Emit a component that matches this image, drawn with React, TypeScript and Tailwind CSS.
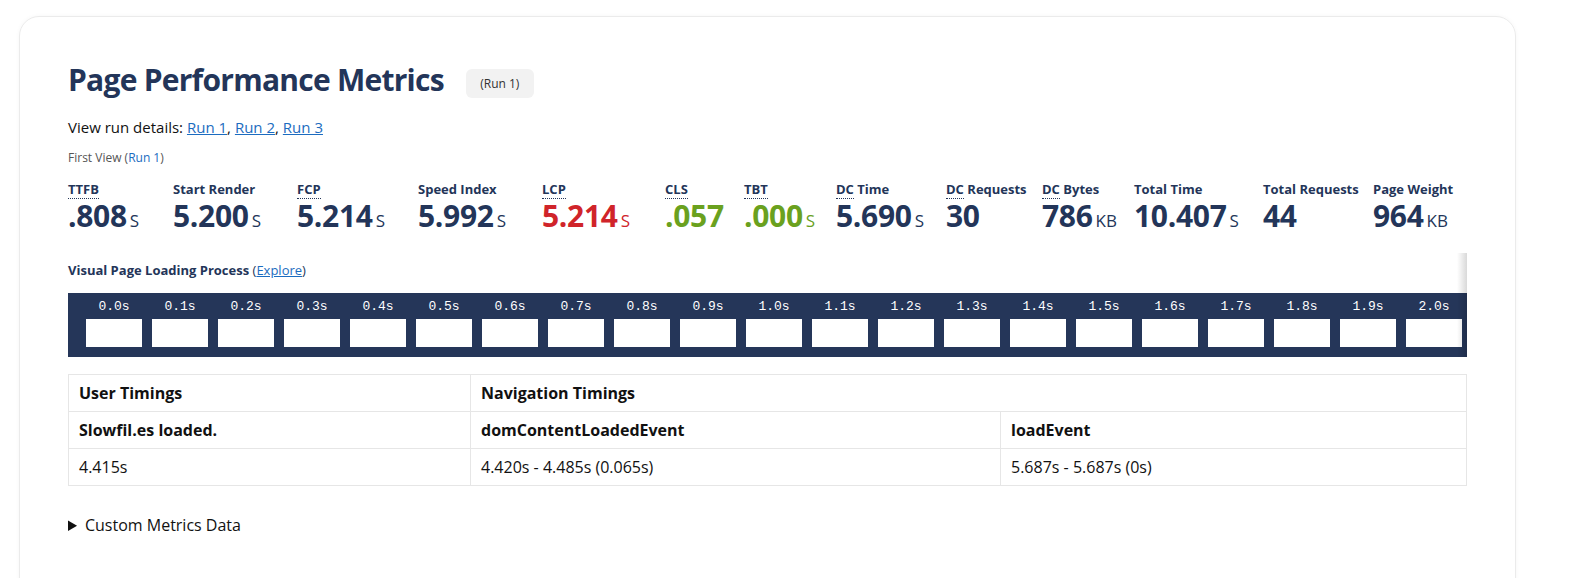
import React from 'react';

const metrics = [
  { label: 'TTFB', abbr: 'TTFB', rest: '', value: '.808', unit: 's', color: 'text-[#233559]', w: 'w-[105px]' },
  { label: 'Start Render', abbr: '', rest: 'Start Render', value: '5.200', unit: 's', color: 'text-[#233559]', w: 'w-[124px]' },
  { label: 'FCP', abbr: 'FCP', rest: '', value: '5.214', unit: 's', color: 'text-[#233559]', w: 'w-[121px]' },
  { label: 'Speed Index', abbr: '', rest: 'Speed Index', value: '5.992', unit: 's', color: 'text-[#233559]', w: 'w-[124px]' },
  { label: 'LCP', abbr: 'LCP', rest: '', value: '5.214', unit: 's', color: 'text-[#d0242a]', w: 'w-[123px]' },
  { label: 'CLS', abbr: 'CLS', rest: '', value: '.057', unit: '', color: 'text-[#6aa11e]', w: 'w-[79px]' },
  { label: 'TBT', abbr: 'TBT', rest: '', value: '.000', unit: 's', color: 'text-[#6aa11e]', w: 'w-[92px]' },
  { label: 'DC Time', abbr: 'DC', rest: ' Time', value: '5.690', unit: 's', color: 'text-[#233559]', w: 'w-[110px]' },
  { label: 'DC Requests', abbr: 'DC', rest: ' Requests', value: '30', unit: '', color: 'text-[#233559]', w: 'w-[96px]' },
  { label: 'DC Bytes', abbr: 'DC', rest: ' Bytes', value: '786', unit: 'KB', color: 'text-[#233559]', w: 'w-[92px]' },
  { label: 'Total Time', abbr: '', rest: 'Total Time', value: '10.407', unit: 's', color: 'text-[#233559]', w: 'w-[129px]' },
  { label: 'Total Requests', abbr: '', rest: 'Total Requests', value: '44', unit: '', color: 'text-[#233559]', w: 'w-[110px]' },
  { label: 'Page Weight', abbr: '', rest: 'Page Weight', value: '964', unit: 'KB', color: 'text-[#233559]', w: 'w-[100px]' },
];

const frames = Array.from({ length: 21 }, (_, i) => (i / 10).toFixed(1) + 's');

export default function App() {
  return (
    <div className="min-h-screen bg-white pt-4 pl-[19px] font-['Open_Sans',sans-serif] text-[#111]">
      <div className="w-[1497px] rounded-[20px] border border-[#ebebeb] shadow-[0_0_4px_rgba(0,0,0,0.04)] px-12 pt-[45px] pb-24">
        {/* Title */}
        <div className="flex items-start gap-[22px]">
          <h2 className="text-[30px] leading-[36px] font-bold text-[#233559] tracking-[-0.025em]">
            Page Performance Metrics
          </h2>
          <span className="mt-[7px] h-[29px] w-[68px] flex items-center justify-center rounded-md bg-[#f2f2f2] text-[12px] text-[#333]">
            (Run 1)
          </span>
        </div>

        <p className="mt-[18px] text-[15px] leading-[22px]">
          View run details:{' '}
          <a className="text-[#1c6cc0] underline" href="#">Run 1</a>,{' '}
          <a className="text-[#1c6cc0] underline" href="#">Run 2</a>,{' '}
          <a className="text-[#1c6cc0] underline" href="#">Run 3</a>
        </p>

        <p className="mt-3 text-[12px] leading-4 text-[#555]">
          First View (<a className="text-[#1c6cc0]" href="#">Run 1</a>)
        </p>

        {/* Metrics */}
        <div className="mt-[14px] flex">
          {metrics.map((m) => (
            <div key={m.label} className={`${m.w} shrink-0 text-[#233559]`}>
              <div className="text-[13px] leading-[18px] font-bold whitespace-nowrap">
                {m.abbr && (
                  <abbr className="no-underline border-b border-dotted border-[#233559]">{m.abbr}</abbr>
                )}
                {m.rest}
              </div>
              <div className={`mt-[1px] text-[30px] leading-[34px] font-bold whitespace-nowrap tracking-[-0.01em] ${m.color}`}>
                {m.value}
                {m.unit && (
                  <span className="ml-[3px] text-[17px] font-normal uppercase tracking-normal">{m.unit}</span>
                )}
              </div>
            </div>
          ))}
        </div>

        {/* Filmstrip */}
        <div className="relative mt-[23px]">
          <h3 className="text-[13px] leading-[18px] font-bold text-[#233559]">
            Visual Page Loading Process{' '}
            <span className="font-normal">
              (<a className="text-[#1c6cc0] underline" href="#">Explore</a>)
            </span>
          </h3>
          <div className="mt-[14px] h-[64px] bg-[#253659] pl-[13px] pt-[7px] flex overflow-hidden">
            {frames.map((f) => (
              <div key={f} className="w-[66px] shrink-0 flex flex-col items-center">
                <span className="text-[13px] leading-[14px] text-white font-['Liberation_Mono',monospace]">{f}</span>
                <div className="mt-[5px] w-[56px] h-[28px] bg-white" />
              </div>
            ))}
          </div>
          <div className="absolute right-0 top-[-8px] bottom-0 w-[10px] bg-gradient-to-l from-black/15 to-transparent" />
        </div>

        {/* Timings table */}
        <table className="mt-[17px] w-full border-collapse text-[16px] leading-5">
          <tbody>
            <tr>
              <th className="w-[402px] border border-[#e6e6e6] px-[10px] py-2 text-left font-bold">User Timings</th>
              <th colSpan={2} className="border border-[#e6e6e6] px-[10px] py-2 text-left font-bold">Navigation Timings</th>
            </tr>
            <tr>
              <th className="border border-[#e6e6e6] px-[10px] py-2 text-left font-bold">Slowfil.es loaded.</th>
              <th className="w-[530px] border border-[#e6e6e6] px-[10px] py-2 text-left font-bold">domContentLoadedEvent</th>
              <th className="border border-[#e6e6e6] px-[10px] py-2 text-left font-bold">loadEvent</th>
            </tr>
            <tr>
              <td className="border border-[#e6e6e6] px-[10px] py-2">4.415s</td>
              <td className="border border-[#e6e6e6] px-[10px] py-2">4.420s - 4.485s (0.065s)</td>
              <td className="border border-[#e6e6e6] px-[10px] py-2">5.687s - 5.687s (0s)</td>
            </tr>
          </tbody>
        </table>

        <details className="mt-[28px] text-[16px] leading-[22px]">
          <summary className="cursor-pointer">Custom Metrics Data</summary>
        </details>
      </div>
    </div>
  );
}
